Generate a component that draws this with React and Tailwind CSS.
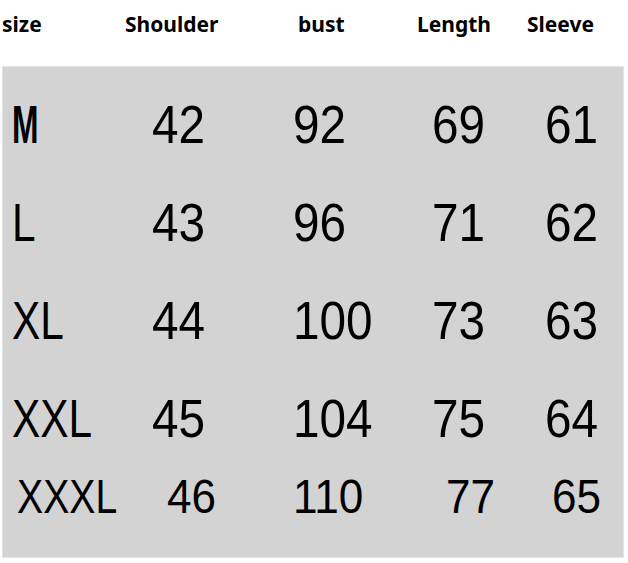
function Cell({ children, letter, className = "" }) {
  return (
    <div className={className}>
      <span
        className={
          "inline-block origin-left " +
          (letter ? "scale-x-[0.8]" : "scale-x-[0.9]")
        }
      >
        {children}
      </span>
    </div>
  );
}

export default function App() {
  const rows = [
    ["L", "43", "96", "71", "62"],
    ["XL", "44", "100", "73", "63"],
    ["XXL", "45", "104", "75", "64"],
  ];
  const num = { fontFamily: '"Liberation Sans", Arial, sans-serif' };
  return (
    <div className="w-[628px] h-[563px] bg-white overflow-hidden">
      <div
        className="flex h-[66px] pt-[10px] pl-[2px] text-[21px] leading-[28px] font-bold text-black"
        style={{ fontFamily: '"Noto Sans", "Open Sans", sans-serif' }}
      >
        <div className="w-[123px]">size</div>
        <div className="w-[173px]">Shoulder</div>
        <div className="w-[119px]">bust</div>
        <div className="w-[110px]">Length</div>
        <div>Sleeve</div>
      </div>
      <div
        className="ml-[2px] w-[622px] h-[492px] bg-[#d3d3d3] border border-[#e3e3e3] pt-[9px] pl-[9px] text-black"
        style={num}
      >
        <div className="grid grid-cols-[140px_141px_139px_113px_1fr] h-[98px] text-[53px] leading-[98px]">
          <div>
            <span className="inline-block origin-left scale-x-[0.6] font-bold">M</span>
          </div>
          <Cell>42</Cell>
          <Cell>92</Cell>
          <Cell>69</Cell>
          <Cell>61</Cell>
        </div>
        {rows.map((r) => (
          <div
            key={r[0]}
            className="grid grid-cols-[140px_141px_139px_113px_1fr] h-[98px] text-[53px] leading-[98px]"
          >
            {r.map((c, i) => (
              <Cell key={i} letter={i === 0}>
                {c}
              </Cell>
            ))}
          </div>
        ))}
        <div className="grid grid-cols-[140px_141px_139px_113px_1fr] h-[56px] text-[49px] leading-[56px]">
          <Cell letter className="ml-[5px]">XXXL</Cell>
          <Cell className="ml-[15px]">46</Cell>
          <Cell>110</Cell>
          <Cell className="ml-[14px]">77</Cell>
          <Cell className="ml-[7px]">65</Cell>
        </div>
      </div>
    </div>
  );
}
